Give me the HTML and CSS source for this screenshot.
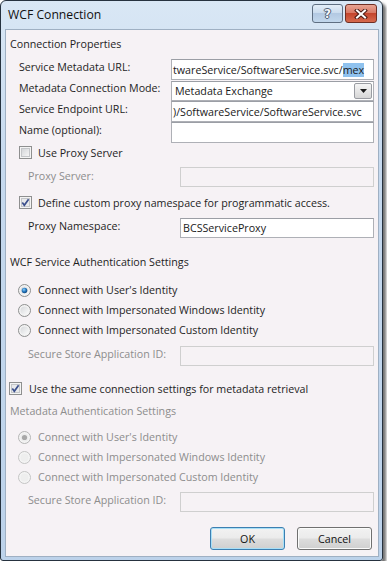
FILE: index.html
```html
<!DOCTYPE html>
<html>
<head>
<meta charset="utf-8">
<link rel="stylesheet" href="styles.css">
</head>
<body>
<div class="window">
  <div class="titlebar">
    <span class="title">WCF Connection</span>
    <div class="caption-btns">
      <div class="cbtn help"><span class="q">?</span></div>
      <div class="cbtn close">
        <svg width="14" height="10" viewBox="0 0 14 10"><path d="M3 1.5 L11 8.5 M11 1.5 L3 8.5" stroke="#4a1a14" stroke-width="4" stroke-linecap="square" fill="none"/><path d="M3 1.5 L11 8.5 M11 1.5 L3 8.5" stroke="#ffffff" stroke-width="2" stroke-linecap="square" fill="none"/></svg>
      </div>
    </div>
  </div>
  <div class="client">
    <div class="header h1">Connection Properties</div>

    <div class="field a f1">
      <span class="label">Service Metadata URL:</span>
      <div class="input"><span class="val">twareService/SoftwareService.svc/<span class="sel">mex</span></span></div>
    </div>
    <div class="field a">
      <span class="label">Metadata Connection Mode:</span>
      <div class="select">
        <span class="val">Metadata Exchange</span>
        <span class="drop"><svg width="7" height="4" viewBox="0 0 7 4"><path d="M0 0 H7 L3.5 4 Z" fill="#1a1a1a"/></svg></span>
      </div>
    </div>
    <div class="field a">
      <span class="label">Service Endpoint URL:</span>
      <div class="input"><span class="val">)/SoftwareService/SoftwareService.svc</span></div>
    </div>
    <div class="field a">
      <span class="label">Name (optional):</span>
      <div class="input"></div>
    </div>

    <div class="check cb1">
      <svg class="box" width="13" height="13" viewBox="0 0 13 13"><defs><linearGradient id="g1" x1="0" y1="0" x2="1" y2="1"><stop offset="0" stop-color="#d2d4d7"/><stop offset="1" stop-color="#f7f7f7"/></linearGradient></defs><rect x="0.5" y="0.5" width="12" height="12" fill="#f4f4f4" stroke="#8e8f8f"/><rect x="2.5" y="2.5" width="8" height="8" fill="url(#g1)" stroke="#c4c6c9"/></svg>
      <span>Use Proxy Server</span>
    </div>

    <div class="field b f5 disabled">
      <span class="label">Proxy Server:</span>
      <div class="input off"></div>
    </div>

    <div class="check cb2">
      <svg class="box" width="13" height="13" viewBox="0 0 13 13"><rect x="0.5" y="0.5" width="12" height="12" fill="#f4f4f4" stroke="#8e8f8f"/><rect x="2.5" y="2.5" width="8" height="8" fill="#e8e9eb" stroke="#c4c6c9"/><path d="M3.3 6.6 L5.3 9.2 L9.6 3.2" stroke="#3b4f8c" stroke-width="1.7" fill="none"/></svg>
      <span>Define custom proxy namespace for programmatic access.</span>
    </div>

    <div class="field b f6">
      <span class="label">Proxy Namespace:</span>
      <div class="input"><span class="val">BCSServiceProxy</span></div>
    </div>

    <div class="header h2">WCF Service Authentication Settings</div>

    <div class="radio r1">
      <svg class="dot" width="13" height="13" viewBox="0 0 13 13"><defs><radialGradient id="rs" cx="0.4" cy="0.35" r="0.7"><stop offset="0" stop-color="#8fd0f8"/><stop offset="0.5" stop-color="#2a7cc2"/><stop offset="1" stop-color="#0f3f75"/></radialGradient><linearGradient id="rb" x1="0" y1="0" x2="1" y2="1"><stop offset="0" stop-color="#d6d8db"/><stop offset="1" stop-color="#fbfbfb"/></linearGradient></defs><circle cx="6.5" cy="6.5" r="6" fill="#f3f3f3" stroke="#8e8f8f"/><circle cx="6.5" cy="6.5" r="4" fill="url(#rb)"/><circle cx="6.5" cy="6.5" r="2.8" fill="url(#rs)"/></svg>
      <span>Connect with User's Identity</span>
    </div>
    <div class="radio">
      <svg class="dot" width="13" height="13" viewBox="0 0 13 13"><circle cx="6.5" cy="6.5" r="6" fill="#f3f3f3" stroke="#8e8f8f"/><circle cx="6.5" cy="6.5" r="4" fill="url(#rb)"/></svg>
      <span>Connect with Impersonated Windows Identity</span>
    </div>
    <div class="radio">
      <svg class="dot" width="13" height="13" viewBox="0 0 13 13"><circle cx="6.5" cy="6.5" r="6" fill="#f3f3f3" stroke="#8e8f8f"/><circle cx="6.5" cy="6.5" r="4" fill="url(#rb)"/></svg>
      <span>Connect with Impersonated Custom Identity</span>
    </div>

    <div class="field b f7 disabled">
      <span class="label">Secure Store Application ID:</span>
      <div class="input off"></div>
    </div>

    <div class="check cb3">
      <svg class="box" width="13" height="13" viewBox="0 0 13 13"><rect x="0.5" y="0.5" width="12" height="12" fill="#f4f4f4" stroke="#8e8f8f"/><rect x="2.5" y="2.5" width="8" height="8" fill="#e8e9eb" stroke="#c4c6c9"/><path d="M3.3 6.6 L5.3 9.2 L9.6 3.2" stroke="#3b4f8c" stroke-width="1.7" fill="none"/></svg>
      <span>Use the same connection settings for metadata retrieval</span>
    </div>

    <div class="header h3 disabled">Metadata Authentication Settings</div>

    <div class="radio r4 disabled">
      <svg class="dot" width="13" height="13" viewBox="0 0 13 13"><circle cx="6.5" cy="6.5" r="6" fill="#f4f4f4" stroke="#b5b5b5"/><circle cx="6.5" cy="6.5" r="4" fill="#ececec"/><circle cx="6.5" cy="6.5" r="2.6" fill="#a8a8a8"/></svg>
      <span>Connect with User's Identity</span>
    </div>
    <div class="radio disabled">
      <svg class="dot" width="13" height="13" viewBox="0 0 13 13"><circle cx="6.5" cy="6.5" r="6" fill="#f4f4f4" stroke="#c4c4c4"/><circle cx="6.5" cy="6.5" r="4" fill="#eeeeee"/></svg>
      <span>Connect with Impersonated Windows Identity</span>
    </div>
    <div class="radio disabled">
      <svg class="dot" width="13" height="13" viewBox="0 0 13 13"><circle cx="6.5" cy="6.5" r="6" fill="#f4f4f4" stroke="#c4c4c4"/><circle cx="6.5" cy="6.5" r="4" fill="#eeeeee"/></svg>
      <span>Connect with Impersonated Custom Identity</span>
    </div>

    <div class="field b f8 disabled">
      <span class="label">Secure Store Application ID:</span>
      <div class="input off"></div>
    </div>

    <div class="buttons">
      <div class="btn default">OK</div>
      <div class="btn">Cancel</div>
    </div>
  </div>
</div>
</body>
</html>
```
FILE: styles.css
```css
* { box-sizing: border-box; }
body {
  margin: 0;
  background: #ffffff;
  font-family: "Open Sans", "Noto Sans", sans-serif;
  font-size: 10.7px;
  color: #1e1e1e;
}
.window {
  width: 383px;
  height: 561px;
  border: 1px solid #26323f;
  border-radius: 6px 6px 3px 3px;
  background: linear-gradient(180deg, #d9e7f5 0%, #c6d9ee 30%, #bcd2ea 100%);
  box-shadow: 3px 3px 3px rgba(0, 0, 0, 0.55);
  display: flex;
  flex-direction: column;
  padding: 0 3px 3px 4px;
}
.titlebar {
  height: 28px;
  flex: none;
  display: flex;
  align-items: flex-start;
  justify-content: space-between;
}
.title {
  font-size: 12.2px;
  color: #111;
  margin-left: 3px;
  line-height: 16px;
  margin-top: 6px;
}
.caption-btns {
  display: flex;
  gap: 2px;
  margin-top: 3px;
  margin-right: 2px;
}
.cbtn {
  width: 31px;
  height: 19px;
  border: 1px solid #5f6f82;
  border-radius: 3px;
  display: flex;
  align-items: center;
  justify-content: center;
}
.help {
  background: linear-gradient(180deg, #e4eef8 0%, #cbdcee 45%, #b3c9e2 50%, #c2d7ec 100%);
}
.close {
  width: 32px;
  background: linear-gradient(180deg, #e8a493 0%, #d97a66 45%, #c4452d 50%, #d66a4e 100%);
  border-color: #6f2f24;
}
.q {
  font-family: "DejaVu Sans", sans-serif;
  font-weight: bold;
  font-size: 12px;
  color: #f4f6f9;
  line-height: 12px;
  text-shadow: 0 0 1px #3f4f66, 1px 0 0 #56657a, -1px 0 0 #56657a, 0 1px 0 #56657a, 0 -1px 0 #56657a;
}
.client {
  flex: 1;
  background: #f6f2f5;
  border: 1px solid #9fb0c3;
  padding: 0 4px;
  display: flex;
  flex-direction: column;
}
.header {
  height: 16px;
  line-height: 16px;
  white-space: nowrap;
}
.h1 { margin-top: 6px; }
.h2 { margin-top: 16px; }
.h3 { margin-top: 6px; }
.disabled, .disabled .label { color: #8d8d8d; }

.field {
  display: flex;
  height: 21px;
  align-items: flex-start;
}
.field.a { padding-left: 9px; }
.field.b { padding-left: 18px; height: 20px; }
.f1 { margin-top: 7px; }
.f5 { margin-top: 6px; height: 21px; }
.f6 { margin-top: 7px; }
.f7 { margin-top: 6px; }
.f8 { margin-top: 5px; height: 21px; }
.label {
  width: 152px;
  flex: none;
  line-height: 17px;
  white-space: nowrap;
}
.f5 .label { line-height: 19px; }
.input, .select {
  flex: 1;
  height: 100%;
  background: #ffffff;
  border: 1px solid #aeb0b6;
  border-top-color: #9b9ea5;
  display: flex;
  align-items: center;
  overflow: hidden;
  white-space: nowrap;
  padding: 0 2px 0 1px;
  color: #1a1a1a;
}
.f6 .input { padding-left: 2px; }
.input.off {
  background: #f6f2f5;
  border-color: #cfcfcf;
}
.val { flex: none; }
.sel { background: #8fc2ee; }
.select {
  height: 20px;
  margin-top: 1px;
  justify-content: space-between;
  padding: 0 1px 0 3px;
}
.drop {
  width: 18px;
  height: 16px;
  border: 1px solid #9a9ca2;
  border-radius: 2px;
  background: linear-gradient(180deg, #f5f5f5 0%, #e6e6e6 50%, #d6d6d6 100%);
  display: flex;
  align-items: center;
  justify-content: center;
}

.check, .radio {
  display: flex;
  align-items: center;
  height: 17px;
  white-space: nowrap;
}
.check .box { flex: none; margin-right: 6px; }
.cb1 { margin-top: 1px; padding-left: 9px; }
.cb2 { margin-top: 7px; padding-left: 9px; }
.cb3 { margin-top: 14px; padding-left: 0; margin-left: -1px; }
.cb3 .box { margin-right: 7px; }

.radio { height: 20px; padding-left: 8px; }
.radio .dot { flex: none; margin-right: 7px; }
.r1 { margin-top: 10px; }
.r4 { margin-top: 8px; }

.buttons {
  display: flex;
  justify-content: flex-end;
  gap: 12px;
  margin-top: 15px;
  padding-right: 2px;
}
.btn {
  width: 75px;
  height: 23px;
  border: 1px solid #707070;
  border-radius: 3px;
  background: linear-gradient(180deg, #f2f2f2 0%, #ebebeb 48%, #dddddd 52%, #cfcfcf 100%);
  display: flex;
  align-items: center;
  justify-content: center;
  color: #111;
  box-shadow: inset 0 0 0 1px #fbfbfb;
}
.btn.default {
  border-color: #3c7fb1;
  box-shadow: inset 0 0 0 1px #a8dff7;
}
```
